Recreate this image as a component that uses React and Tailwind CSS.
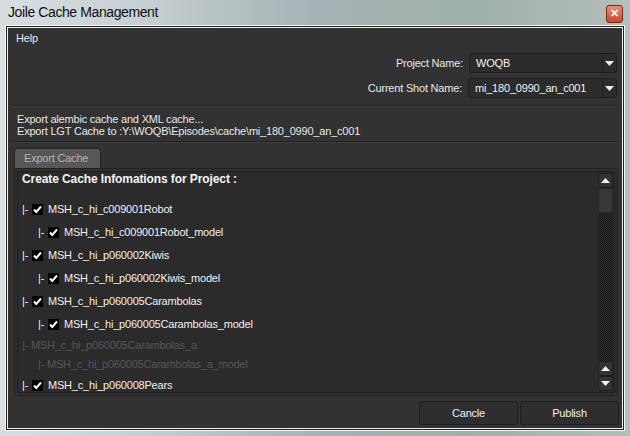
import React from 'react'

const items = [
  { level: 1, name: 'MSH_c_hi_c009001Robot', checked: true },
  { level: 2, name: 'MSH_c_hi_c009001Robot_model', checked: true },
  { level: 1, name: 'MSH_c_hi_p060002Kiwis', checked: true },
  { level: 2, name: 'MSH_c_hi_p060002Kiwis_model', checked: true },
  { level: 1, name: 'MSH_c_hi_p060005Carambolas', checked: true },
  { level: 2, name: 'MSH_c_hi_p060005Carambolas_model', checked: true },
  { level: 1, name: 'MSH_c_hi_p060005Carambolas_a', checked: false },
  { level: 2, name: 'MSH_c_hi_p060005Carambolas_a_model', checked: false },
  { level: 1, name: 'MSH_c_hi_p060008Pears', checked: true },
]

function CheckBox() {
  return (
    <svg width="11" height="11" viewBox="0 0 11 11" className="shrink-0">
      <rect width="11" height="11" fill="#000" />
      <path d="M2 5.5 L4.3 8 L9 2.5" stroke="#fff" strokeWidth="2" fill="none" />
    </svg>
  )
}

function Arrow({ up }) {
  return (
    <svg width="9" height="5" viewBox="0 0 9 5">
      {up ? <path d="M0 5 L4.5 0 L9 5 Z" fill="#f0f0f0" /> : <path d="M0 0 L9 0 L4.5 5 Z" fill="#f0f0f0" />}
    </svg>
  )
}

function Combo({ value, width }) {
  return (
    <div className={`flex h-[20px] ${width} rounded-[3px] border border-[#1e1e1e] bg-[#2c2c2c]`}>
      <div className="flex-1 pl-[6px] leading-[19px] text-[#f2f2f2]">{value}</div>
      <div className="flex w-[14px] items-center justify-center border-l border-[#1e1e1e]">
        <Arrow />
      </div>
    </div>
  )
}

function TreeRow({ item }) {
  const indent = item.level === 2 ? 'pl-[19px]' : 'pl-[3px]'
  if (!item.checked) {
    return (
      <div className={`flex h-[19px] items-center ${indent} text-[#565656]`}>
        <span>|- {item.name}</span>
      </div>
    )
  }
  return (
    <div className={`flex h-[23px] items-center ${indent} text-[#f0f0f0]`}>
      <span className="w-[10px]">|-</span>
      <CheckBox />
      <span className="ml-[5px]">{item.name}</span>
    </div>
  )
}

function ScrollBtn({ up }) {
  return (
    <div className="flex h-[15px] items-center justify-center rounded-[2px] border border-[#1e1e1e] bg-[#333]">
      <Arrow up={up} />
    </div>
  )
}

export default function App() {
  return (
    <div className="flex h-[436px] w-[630px] flex-col bg-[linear-gradient(90deg,#d9dfe1_0%,#c4cdd0_25%,#a6b2b6_50%,#9fb0a8_75%,#b3bfba_100%)] font-['Liberation_Sans',sans-serif] text-[11px] tracking-[-0.2px]">
      <div className="flex h-[25px] items-center justify-between pl-[8px] pr-[7px]">
        <span className="text-[14px] tracking-[-0.4px] text-[#111]">Joile Cache Management</span>
        <div className="mt-[2px] flex h-[18px] w-[17px] items-center justify-center rounded-[3px] border border-[#7a2a1a] bg-[linear-gradient(#ec8e78,#c9452a)]">
          <span className="text-[11px] font-bold leading-none text-white">✕</span>
        </div>
      </div>

      <div className="mx-[5px] h-[406px] border border-[#f4f6f7]">
        <div className="h-full border border-[#222]">
          <div className="flex h-full flex-col border border-[#eef1f2] bg-[#323232] text-[#e8e8e8]">
            <div className="h-[20px] pl-[8px] leading-[20px]">Help</div>

            <div className="mt-[5px] flex flex-col items-end gap-[5px] pr-[5px]">
              <div className="flex items-center gap-[6px]">
                <span>Project Name:</span>
                <Combo value="WOQB" width="w-[148px]" />
              </div>
              <div className="flex items-center gap-[6px]">
                <span>Current Shot Name:</span>
                <Combo value="mi_180_0990_an_c001" width="w-[149px]" />
              </div>
            </div>

            <div className="mx-[4px] mt-[7px] border-t border-b border-t-[#222] border-b-[#3c3c3c]" />
            <div className="pl-[9px] pt-[6px] leading-[12px]">
              <div>Export alembic cache and XML cache...</div>
              <div>Export LGT Cache to :Y:\WOQB\Episodes\cache\mi_180_0990_an_c001</div>
            </div>
            <div className="mx-[4px] mt-[4px] border-t border-b border-t-[#222] border-b-[#3c3c3c]" />

            <div className="ml-[6px] mr-[4px] mt-[5px] flex flex-col">
              <div className="flex">
                <div className="h-[20px] w-[87px] rounded-t-[3px] border border-b-0 border-[#222] bg-[#575757] pl-[9px] leading-[19px] text-[#b4b4b4]">
                  Export Cache
                </div>
              </div>
              <div className="h-[228px] rounded-[2px] border border-[#222] bg-[#2f2f2f] p-[2px]">
                <div className="flex h-full rounded-[2px] border border-[#1f1f1f] bg-[#2b2b2b]">
                  <div className="flex-1 overflow-hidden pl-[1px]">
                    <div className="pl-[3px] text-[12px] font-bold leading-[15px] tracking-[-0.1px] text-[#f4f4f4]">
                      Create Cache Infomations for Project :
                    </div>
                    <div className="mt-[11px]">
                      {items.map((item) => (
                        <TreeRow key={item.name} item={item} />
                      ))}
                    </div>
                  </div>
                  <div className="mr-[1px] flex w-[15px] flex-col pt-[1px] pb-[1px]">
                    <ScrollBtn up />
                    <div className="h-[25px] border border-[#262626] bg-[#383838]" />
                    <div className="flex-1 bg-[repeating-conic-gradient(#141414_0_25%,#303030_0_50%)] bg-[length:2px_2px]" />
                    <ScrollBtn up />
                    <ScrollBtn />
                  </div>
                </div>
              </div>
            </div>

            <div className="mt-[5px] flex justify-end gap-[2px] pr-[3px]">
              <div className="flex h-[24px] w-[99px] items-center justify-center rounded-[3px] border border-[#1e1e1e] bg-[#2e2e2e] text-[#f0f0f0]">
                Cancle
              </div>
              <div className="flex h-[24px] w-[99px] items-center justify-center rounded-[3px] border border-[#1e1e1e] bg-[#2e2e2e] text-[#f0f0f0]">
                Publish
              </div>
            </div>
          </div>
        </div>
      </div>
    </div>
  )
}
